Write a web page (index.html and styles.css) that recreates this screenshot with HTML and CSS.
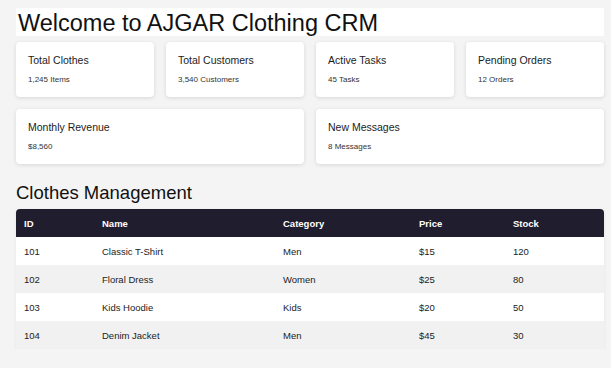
FILE: index.html
```html
<!DOCTYPE html>
<html lang="en">
<head>
<meta charset="utf-8">
<title>AJGAR Clothing CRM</title>
<link rel="stylesheet" href="styles.css">
</head>
<body>
<main class="page">
  <h1 class="title">Welcome to AJGAR Clothing CRM</h1>
  <section class="cards">
    <div class="card"><h3 class="card-title">Total Clothes</h3><p class="card-sub">1,245 Items</p></div>
    <div class="card"><h3 class="card-title">Total Customers</h3><p class="card-sub">3,540 Customers</p></div>
    <div class="card"><h3 class="card-title">Active Tasks</h3><p class="card-sub">45 Tasks</p></div>
    <div class="card"><h3 class="card-title">Pending Orders</h3><p class="card-sub">12 Orders</p></div>
    <div class="card card-wide"><h3 class="card-title">Monthly Revenue</h3><p class="card-sub">$8,560</p></div>
    <div class="card card-wide"><h3 class="card-title">New Messages</h3><p class="card-sub">8 Messages</p></div>
  </section>
  <h2 class="section-title">Clothes Management</h2>
  <table class="table">
    <colgroup>
      <col class="c-id"><col class="c-name"><col class="c-cat"><col class="c-price"><col class="c-stock">
    </colgroup>
    <thead>
      <tr><th>ID</th><th>Name</th><th>Category</th><th>Price</th><th>Stock</th></tr>
    </thead>
    <tbody>
      <tr><td>101</td><td>Classic T-Shirt</td><td>Men</td><td>$15</td><td>120</td></tr>
      <tr><td>102</td><td>Floral Dress</td><td>Women</td><td>$25</td><td>80</td></tr>
      <tr><td>103</td><td>Kids Hoodie</td><td>Kids</td><td>$20</td><td>50</td></tr>
      <tr><td>104</td><td>Denim Jacket</td><td>Men</td><td>$45</td><td>30</td></tr>
    </tbody>
  </table>
</main>
</body>
</html>
```
FILE: styles.css
```css
html, body {
  margin: 0;
  padding: 0;
  background: #f4f4f4;
  font-family: "Liberation Sans", Arial, sans-serif;
  color: #222;
}

.page {
  width: 588px;
  margin: 0 0 0 16px;
  padding-top: 8px;
}

.title {
  margin: 0;
  background: #fff;
  height: 28px;
  line-height: 28px;
  padding: 1px 0 0 2px;
  box-sizing: border-box;
  font-size: 23.5px;
  font-weight: normal;
  color: #111;
}

.cards {
  margin-top: 6px;
  display: grid;
  grid-template-columns: repeat(4, 1fr);
  gap: 12px;
}

.card {
  background: #fff;
  border-radius: 4px;
  box-shadow: 0 1px 4px rgba(0, 0, 0, 0.12);
  height: 55px;
  box-sizing: border-box;
  padding: 12px 12px 0 12px;
}

.card-wide {
  grid-column: span 2;
}

.card-title {
  margin: 0;
  font-size: 10.5px;
  font-weight: normal;
  line-height: 12px;
  color: #1c1c1c;
}

.card-sub {
  margin: 9px 0 0 0;
  font-size: 8px;
  line-height: 9px;
  color: #333;
}

.section-title {
  margin: 18px 0 0 0;
  font-size: 18.5px;
  font-weight: normal;
  line-height: 21px;
  color: #111;
}

.table {
  margin-top: 6px;
  width: 588px;
  border-collapse: separate;
  border-spacing: 0;
  table-layout: fixed;
  box-shadow: 0 1px 4px rgba(0, 0, 0, 0.06);
  font-size: 9.5px;
}

.c-id { width: 78px; }
.c-name { width: 181px; }
.c-cat { width: 136px; }
.c-price { width: 94px; }
.c-stock { width: 99px; }

.table th,
.table td {
  text-align: left;
  padding: 0 0 0 8px;
  height: 28px;
  vertical-align: middle;
}

.table th {
  background: #1f1d2e;
  color: #fff;
  font-weight: bold;
}

.table th:first-child { border-top-left-radius: 4px; }
.table th:last-child { border-top-right-radius: 4px; }

.table td {
  color: #222;
  background: #fff;
}

.table tbody tr:nth-child(even) td {
  background: #f1f1f1;
}
```
